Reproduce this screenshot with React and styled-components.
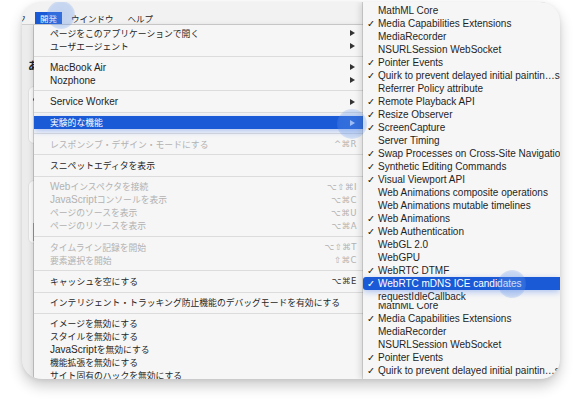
import React from "react";
import styled, { createGlobalStyle, css } from "styled-components";

const GlobalStyle = createGlobalStyle`
  html, body {
    margin: 0;
    padding: 0;
    background: #fff;
  }
  body {
    font-family: "Liberation Sans", "Noto Sans CJK JP", sans-serif;
  }
`;

const BLUE = "#1b5ad6";

const mainItems = [
  { label: "ページをこのアプリケーションで開く", arrow: true },
  { label: "ユーザエージェント", arrow: true },
  { sep: true },
  { label: "MacBook Air", arrow: true },
  { label: "Nozphone", arrow: true },
  { sep: true },
  { label: "Service Worker", arrow: true },
  { sep: true },
  { label: "実験的な機能", arrow: true, active: true },
  { sep: true },
  { label: "レスポンシブ・デザイン・モードにする", key: "^⌘R", dim: true },
  { sep: true },
  { label: "スニペットエディタを表示" },
  { sep: true },
  { label: "Webインスペクタを接続", key: "⌥⇧⌘I", dim: true },
  { label: "JavaScriptコンソールを表示", key: "⌥⌘C", dim: true },
  { label: "ページのソースを表示", key: "⌥⌘U", dim: true },
  { label: "ページのリソースを表示", key: "⌥⌘A", dim: true },
  { sep: true },
  { label: "タイムライン記録を開始", key: "⌥⇧⌘T", dim: true },
  { label: "要素選択を開始", key: "⇧⌘C", dim: true },
  { sep: true },
  { label: "キャッシュを空にする", key: "⌥⌘E" },
  { sep: true },
  { label: "インテリジェント・トラッキング防止機能のデバッグモードを有効にする" },
  { sep: true },
  { label: "イメージを無効にする" },
  { label: "スタイルを無効にする" },
  { label: "JavaScriptを無効にする" },
  { label: "機能拡張を無効にする" },
  { label: "サイト固有のハックを無効にする" },
];

const features = [
  ["MathML Core", false],
  ["Media Capabilities Extensions", true],
  ["MediaRecorder", false],
  ["NSURLSession WebSocket", false],
  ["Pointer Events", true],
  ["Quirk to prevent delayed initial paintin…sites", true],
  ["Referrer Policy attribute", false],
  ["Remote Playback API", true],
  ["Resize Observer", true],
  ["ScreenCapture", true],
  ["Server Timing", false],
  ["Swap Processes on Cross-Site Navigation", true],
  ["Synthetic Editing Commands", true],
  ["Visual Viewport API", true],
  ["Web Animations composite operations", false],
  ["Web Animations mutable timelines", false],
  ["Web Animations", true],
  ["Web Authentication", true],
  ["WebGL 2.0", false],
  ["WebGPU", false],
  ["WebRTC DTMF", true],
  ["WebRTC mDNS ICE candidates", true, true],
  ["requestIdleCallback", false],
];

const CJK = /([\u3000-\u30ff\u3400-\u9fff\uff00-\uffef]+)/;

const Text = ({ children }) =>
  children.split(CJK).map((part, i) => (i % 2 ? <Ja key={i}>{part}</Ja> : part));

const App = () => (
  <>
    <GlobalStyle />
    <Page>
      <Frame>
        <MenuBar>
          <Title $lead>ブックマーク</Title>
          <Title $active>開発</Title>
          <Title>ウインドウ</Title>
          <Title>ヘルプ</Title>
        </MenuBar>

        <PageStrip>
          <Heading>あ</Heading>
          <Card $h={58} $pt={11}>
            <Dot />
          </Card>
          <Card $h={64} $pt={42} $mt={36}>
            <Bar />
          </Card>
        </PageStrip>

        <MainMenu>
          {mainItems.map((item, i) =>
            item.sep ? (
              <Separator key={i} />
            ) : (
              <Row key={i} $dim={item.dim} $active={item.active}>
                <Label>
                  <Text>{item.label}</Text>
                </Label>
                {item.key && <Shortcut $dim={item.dim}>{item.key}</Shortcut>}
                {item.arrow && <Arrow $active={item.active} />}
              </Row>
            )
          )}
        </MainMenu>

        <SubMenu>
          {features.map(([name, on, active]) => (
            <SubRow key={name} $active={active}>
              <Check>{on ? "✓" : ""}</Check>
              {name}
            </SubRow>
          ))}
          <Repeat>
            <RepeatInner>
              {features.slice(0, 7).map(([name, on]) => (
                <SubRow key={name}>
                  <Check>{on ? "✓" : ""}</Check>
                  {name}
                </SubRow>
              ))}
            </RepeatInner>
          </Repeat>
        </SubMenu>

        <Glow $x={25} $y={-1} $size={28} />
        <Glow $x={315} $y={107} $size={30} />
        <Glow $x={476} $y={268} $size={28} />
      </Frame>
    </Page>
  </>
);

const Page = styled.div`
  width: 581px;
  height: 404px;
  padding: 2px 0 0 22px;
  box-sizing: border-box;
  overflow: hidden;
`;

const Frame = styled.div`
  position: relative;
  width: 538px;
  height: 377px;
  border-radius: 20px;
  overflow: hidden;
  background: #efefef;
  box-shadow: 0 7px 14px rgba(0, 0, 0, 0.2), 0 1px 4px rgba(0, 0, 0, 0.08);
  display: grid;
  grid-template-columns: 12px 329px 1fr;
  grid-template-rows: 23px 1fr;
`;

const MenuBar = styled.div`
  grid-column: 1 / 3;
  grid-row: 1;
  display: flex;
  align-items: flex-end;
  gap: 4px;
  background: #f2f2f2;
  border-bottom: 1px solid #cfcfcf;
  overflow: hidden;
  font-family: "Noto Sans CJK JP", sans-serif;
  font-size: 8.5px;
  color: #222;
`;

const Title = styled.div`
  height: 12px;
  line-height: 12px;
  padding: 0 5px;
  white-space: nowrap;
  flex-shrink: 0;
  ${(p) => p.$lead && css`margin-left: -52px;`}
  ${(p) =>
    p.$active &&
    css`
      background: ${BLUE};
      color: #fff;
    `}
`;

const PageStrip = styled.div`
  grid-column: 1;
  grid-row: 2;
  overflow: hidden;
  padding: 33px 0 0 6px;
  background: #ececec;
`;

const Heading = styled.div`
  font-family: "Noto Sans CJK JP", sans-serif;
  font-weight: 700;
  font-size: 11px;
  line-height: 14px;
  color: #222;
`;

const Card = styled.div`
  margin-top: ${(p) => p.$mt || 14}px;
  height: ${(p) => p.$h}px;
  width: 40px;
  box-sizing: border-box;
  padding: ${(p) => p.$pt}px 0 0 4px;
  background: #fafafa;
  border: 1px solid #e0e0e0;
  border-radius: 6px;
`;

const Dot = styled.div`
  width: 3px;
  height: 3px;
  border-radius: 50%;
  background: #e0352b;
`;

const Bar = styled.div`
  width: 3px;
  height: 18px;
  background: #eea23a;
`;

const MainMenu = styled.div`
  grid-column: 2;
  grid-row: 2;
  z-index: 1;
  padding-top: 1.5px;
  background: #f6f6f6;
  box-shadow: -1px 0 0 rgba(0, 0, 0, 0.16), -2px 0 5px rgba(0, 0, 0, 0.1);
  overflow: hidden;
`;

const Row = styled.div`
  height: 13px;
  display: flex;
  align-items: center;
  padding: 0 6px 0 16px;
  font-size: 10px;
  color: ${(p) => (p.$dim ? "#b2b2b2" : "#1f1f1f")};
  white-space: nowrap;
  ${(p) =>
    p.$active &&
    css`
      background: ${BLUE};
      color: #fff;
      box-shadow: 0 2px 6px rgba(40, 100, 230, 0.35);
      position: relative;
    `}
`;

const Label = styled.span`
  flex: 1;
  line-height: 13px;
`;

const Ja = styled.span`
  font-family: "Noto Sans CJK JP", sans-serif;
  font-size: 8.8px;
`;

const Shortcut = styled.span`
  font-family: "DejaVu Sans", "Liberation Sans", sans-serif;
  font-size: 8.5px;
  letter-spacing: 0.5px;
  color: ${(p) => (p.$dim ? "#b2b2b2" : "#333")};
`;

const Arrow = styled.span`
  width: 0;
  height: 0;
  margin-right: 2px;
  border-left: 5px solid ${(p) => (p.$active ? "#bcd2ff" : "#333")};
  border-top: 3.5px solid transparent;
  border-bottom: 3.5px solid transparent;
`;

const Separator = styled.div`
  height: 8.3px;
  display: flex;
  align-items: center;
  &::before {
    content: "";
    flex: 1;
    height: 1px;
    background: #dcdcdc;
  }
`;

const SubMenu = styled.div`
  grid-column: 3;
  grid-row: 1 / 3;
  z-index: 2;
  min-width: 0;
  padding-top: 1.5px;
  background: #f6f6f6;
  box-shadow: -1px 0 0 rgba(0, 0, 0, 0.12), -3px 0 6px rgba(0, 0, 0, 0.12);
  overflow: hidden;
`;

const SubRow = styled.div`
  height: 13px;
  display: flex;
  align-items: center;
  padding-left: 4px;
  font-size: 10px;
  line-height: 13px;
  color: #1f1f1f;
  white-space: nowrap;
  ${(p) =>
    p.$active &&
    css`
      background: ${BLUE};
      color: #fff;
      border-radius: 3px 0 0 3px;
      box-shadow: 0 2px 6px rgba(40, 100, 230, 0.35);
      position: relative;
    `}
`;

const Check = styled.span`
  width: 11px;
  flex-shrink: 0;
  font-family: "DejaVu Sans", sans-serif;
  font-weight: 700;
  font-size: 9.5px;
`;

const Repeat = styled.div`
  overflow: hidden;
`;

const RepeatInner = styled.div`
  margin-top: -4px;
`;

const Glow = styled.div`
  position: absolute;
  left: ${(p) => p.$x}px;
  top: ${(p) => p.$y}px;
  width: ${(p) => p.$size}px;
  height: ${(p) => p.$size}px;
  border-radius: 50%;
  z-index: 3;
  pointer-events: none;
  background: radial-gradient(
    circle,
    rgba(100, 150, 235, 0.34) 0%,
    rgba(100, 150, 235, 0.3) 60%,
    rgba(100, 150, 235, 0) 100%
  );
`;

export default App;
